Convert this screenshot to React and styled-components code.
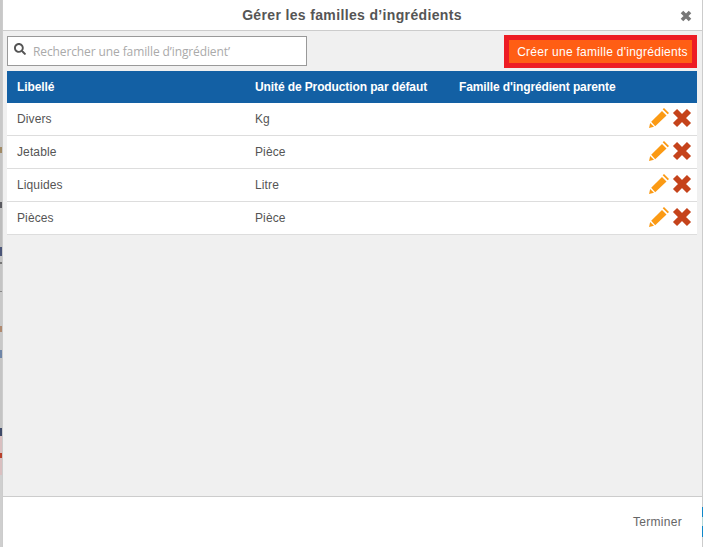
import React from 'react'
import styled, { createGlobalStyle } from 'styled-components'
import { FaSearch } from 'react-icons/fa'

const rows = [
  { label: 'Divers', unit: 'Kg' },
  { label: 'Jetable', unit: 'Pièce' },
  { label: 'Liquides', unit: 'Litre' },
  { label: 'Pièces', unit: 'Pièce' },
]

const GlobalStyle = createGlobalStyle`
  html, body {
    margin: 0;
    padding: 0;
    overflow: hidden;
  }
  body {
    font-family: "Liberation Sans", Arial, sans-serif;
  }
`

const Page = styled.div`
  display: flex;
  width: 703px;
  height: 547px;
  background: #c8c8c8;
`
// the page behind the modal, only a sliver of it shows on each side
const BackdropLeft = styled.div`
  flex: none;
  width: 2px;
  background: linear-gradient(
    to bottom,
    #c8c8c8 0 147px,
    #a08a66 147px 153px,
    #c4c4c4 153px 202px,
    #5a5a60 202px 208px,
    #bdbdbd 208px 247px,
    #4a5578 247px 256px,
    #c4c4c4 256px 262px,
    #777 262px 264px,
    #c4c4c4 264px 291px,
    #888 291px 292px,
    #c8c8c8 292px 326px,
    #b08a70 326px 332px,
    #c8c8c8 332px 350px,
    #6f86a8 350px 358px,
    #c4c4c4 358px 428px,
    #3f4a68 428px 436px,
    #d9bfc0 436px 453px,
    #b8402a 453px 458px,
    #d9bfc0 458px 475px,
    #cfcfcf 475px
  );
`
const BackdropRight = styled.div`
  flex: none;
  width: 1px;
  background: linear-gradient(
    to bottom,
    #ccc 0 507px,
    #0f87c8 507px 517px,
    #b5d8d8 517px 526px,
    #0f87c8 526px 537px,
    #ccc 537px
  );
`
const Modal = styled.div`
  display: flex;
  flex-direction: column;
  width: 700px;
  border-left: 1px solid #ccc;
  box-sizing: border-box;
  background: #fff;
`
const Header = styled.div`
  position: relative;
  flex: none;
  height: 30px;
  display: flex;
  align-items: center;
  justify-content: center;
  padding-right: 1px;
  border-bottom: 1px solid #ccc;
  color: #555;
  font-size: 14px;
  font-weight: bold;
  letter-spacing: 0.35px;
`
const CloseIcon = styled.svg`
  position: absolute;
  right: 10px;
  top: 10px;
  width: 12px;
  height: 12px;
`
const Body = styled.div`
  flex: 1;
  background: #f0f0f0;
  padding: 4px 5px 0 4px;
`
const Toolbar = styled.div`
  display: flex;
  justify-content: space-between;
  align-items: flex-start;
  height: 36px;
`
const Search = styled.div`
  display: flex;
  align-items: center;
  gap: 7px;
  width: 300px;
  height: 30px;
  margin-top: 1px;
  padding-left: 6px;
  box-sizing: border-box;
  background: #fff;
  border: 1px solid #999;
  color: #aaa;
  font-family: "Open Sans", sans-serif;
  font-size: 12px;
  letter-spacing: -0.11px;
`
const SearchIcon = styled(FaSearch)`
  flex: none;
  width: 12px;
  height: 12px;
  margin-top: -5px;
  color: #555;
`
const CreateButton = styled.button`
  width: 193px;
  height: 33px;
  padding: 0 0 0 4px;
  box-sizing: border-box;
  background: #ff5e14;
  border: 5px solid #ed1c24;
  color: #fff;
  font-family: "Liberation Sans", Arial, sans-serif;
  font-size: 12px;
  letter-spacing: 0.27px;
`
const Table = styled.div`
  width: 690px;
`
const Row = styled.div`
  display: grid;
  grid-template-columns: 238px 204px 1fr 50px;
  align-items: center;
  height: 33px;
  padding-left: 10px;
  box-sizing: border-box;
  background: #fff;
  border-bottom: 1px solid #ddd;
  color: #555;
  font-size: 12px;
  letter-spacing: 0.12px;
`
const HeadRow = styled(Row)`
  height: 32px;
  background: #1360a4;
  border-bottom: 0;
  color: #fff;
  font-weight: bold;
  letter-spacing: -0.11px;
`
const Actions = styled.div`
  display: flex;
  align-items: center;
  justify-content: flex-end;
  gap: 3px;
  padding-right: 5px;
  margin-bottom: 2px;
`
const PencilIcon = styled.svg`
  flex: none;
  width: 20px;
  height: 20px;
  fill: #fb9a14;
`
const CrossIcon = styled.svg`
  flex: none;
  width: 20px;
  height: 20px;
`

const Pencil = () => (
  <PencilIcon viewBox="0 0 20 20">
    <path d="M0 20 L1.2 15 L5 18.8 Z" />
    <path d="M2.2 13.8 L13 3 L17.5 7.5 L6.2 18.2 Z" />
    <path d="M15 0 L20 5 L18.7 6.3 L13.7 1.3 Z" />
  </PencilIcon>
)

const Cross = () => (
  <CrossIcon viewBox="0 0 20 20">
    <path d="M3 3 L17 17 M17 3 L3 17" stroke="#c5431b" strokeWidth="5.8" />
  </CrossIcon>
)

const Footer = styled.div`
  flex: none;
  height: 50px;
  display: flex;
  align-items: center;
  justify-content: flex-end;
  padding-right: 20px;
  border-top: 1px solid #ccc;
  color: #666;
  font-size: 12px;
  letter-spacing: 0.3px;
`

export default function App() {
  return (
    <Page>
      <GlobalStyle />
      <BackdropLeft />
      <Modal>
        <Header>
          Gérer les familles d’ingrédients
          <CloseIcon viewBox="0 0 12 12">
            <path d="M2 2 L10 10 M10 2 L2 10" stroke="#777" strokeWidth="3.6" />
          </CloseIcon>
        </Header>
        <Body>
          <Toolbar>
            <Search>
              <SearchIcon />
              Rechercher une famille d’ingrédient’
            </Search>
            <CreateButton>Créer une famille d'ingrédients</CreateButton>
          </Toolbar>
          <Table>
            <HeadRow>
              <span>Libellé</span>
              <span>Unité de Production par défaut</span>
              <span>Famille d'ingrédient parente</span>
            </HeadRow>
            {rows.map(row => (
              <Row key={row.label}>
                <span>{row.label}</span>
                <span>{row.unit}</span>
                <span />
                <Actions>
                  <Pencil />
                  <Cross />
                </Actions>
              </Row>
            ))}
          </Table>
        </Body>
        <Footer>Terminer</Footer>
      </Modal>
      <BackdropRight />
    </Page>
  )
}
